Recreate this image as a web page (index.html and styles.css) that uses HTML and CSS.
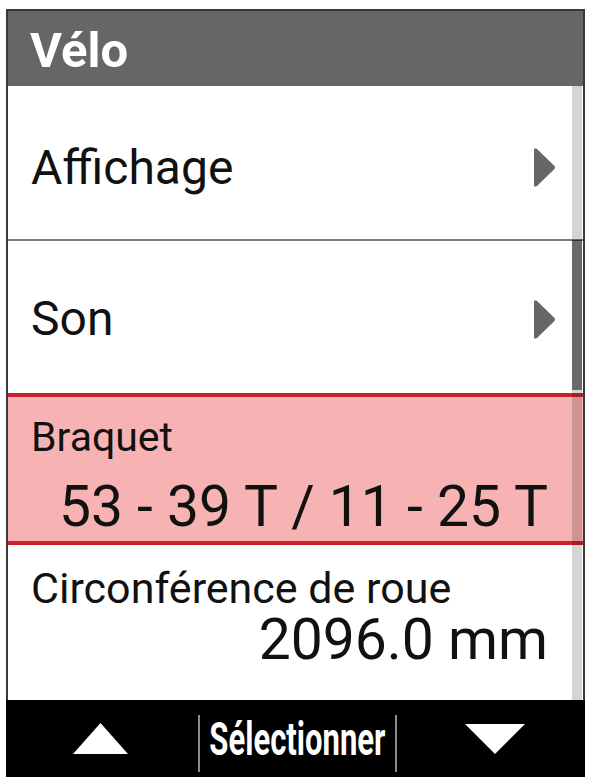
FILE: index.html
```html
<!DOCTYPE html>
<html lang="fr">
<head>
<meta charset="utf-8">
<title>Vélo</title>
<link rel="stylesheet" href="styles.css">
</head>
<body>
<div class="device">
  <div class="header">Vélo</div>
  <div class="list">
    <div class="row row-first">
      <span class="row-label">Affichage</span>
      <svg class="chev" width="24" height="41" viewBox="0 0 24 41"><path d="M2 3 Q2 0 5 2 L22 18.5 Q24 20.5 22 22.5 L5 39 Q2 41 2 38 Z" fill="#666"/></svg>
    </div>
    <div class="row row-second">
      <span class="row-label">Son</span>
      <svg class="chev" width="24" height="41" viewBox="0 0 24 41"><path d="M2 3 Q2 0 5 2 L22 18.5 Q24 20.5 22 22.5 L5 39 Q2 41 2 38 Z" fill="#666"/></svg>
    </div>
    <div class="setting selected">
      <div class="setting-label">Braquet</div>
      <div class="setting-value value-gear">53 - 39 T / 11 - 25 T</div>
    </div>
    <div class="setting plain">
      <div class="setting-label label-wheel">Circonférence de roue</div>
      <div class="setting-value value-wheel">2096.0 mm</div>
    </div>
    <div class="scrollbar"><div class="thumb"></div></div>
  </div>
  <div class="footer">
    <div class="cell cell-up">
      <svg width="55" height="31" viewBox="0 0 55 31"><polygon points="0,31 27.5,0 55,31" fill="#fff"/></svg>
    </div>
    <div class="divider"></div>
    <div class="cell cell-mid"><span class="select">Sélectionner</span></div>
    <div class="divider"></div>
    <div class="cell cell-down">
      <svg width="60" height="30" viewBox="0 0 60 30"><polygon points="0,0 60,0 30,30" fill="#fff"/></svg>
    </div>
  </div>
</div>
</body>
</html>
```
FILE: styles.css
```css
html, body {
  margin: 0;
  padding: 0;
  background: #fff;
}
body {
  font-family: Roboto, "Noto Sans", sans-serif;
  color: #111;
}
.device {
  margin: 9px 0 0 6px;
  width: 575px;
  border: 2px solid #3a3a3a;
  border-bottom: none;
  background: #fff;
}
.header {
  height: 71px;
  padding: 4px 0 0 22px;
  line-height: 71px;
  background: #666;
  color: #fff;
  font-weight: 700;
  font-size: 49px;
}
.list {
  position: relative;
}
.row {
  display: flex;
  align-items: center;
  justify-content: space-between;
  box-sizing: border-box;
  padding: 0 27px 0 23px;
  font-size: 48px;
}
.row-first {
  height: 155px;
  border-bottom: 2px solid #7a7a7a;
  padding-top: 10px;
}
.row-second {
  height: 152px;
  padding-top: 4px;
}
.row-label {
  line-height: 50px;
}
.chev {
  display: block;
}
.setting {
  box-sizing: border-box;
  padding: 0 35px 0 23px;
}
.selected {
  height: 152px;
  background: #f7b3b3;
  border-top: 4px solid #c9232b;
  border-bottom: 4px solid #c9232b;
  padding-top: 16px;
}
.plain {
  height: 155px;
  padding-top: 19px;
}
.setting-label {
  font-size: 41px;
  line-height: 48px;
}
.label-wheel {
  font-size: 43px;
}
.setting-value {
  text-align: right;
}
.value-gear {
  margin-top: 16px;
  font-size: 57px;
  line-height: 60px;
}
.value-wheel {
  font-size: 57px;
  line-height: 56px;
}
.scrollbar {
  position: absolute;
  top: 0;
  right: 1px;
  bottom: 0;
  width: 10px;
  background: rgba(0, 0, 0, 0.17);
}
.thumb {
  margin-top: 154px;
  height: 150px;
  background: rgba(0, 0, 0, 0.5);
}
.footer {
  display: flex;
  align-items: center;
  height: 77px;
  margin: 0 -2px;
  background: #000;
  color: #fff;
}
.cell {
  display: flex;
  align-items: center;
  justify-content: center;
  height: 100%;
}
.cell-up {
  width: 192px;
  box-sizing: border-box;
  justify-content: flex-start;
  padding-left: 67px;
}
.cell-mid {
  width: 195px;
}
.cell-down {
  flex: 1;
  justify-content: flex-start;
  padding-left: 68px;
}
.divider {
  width: 2px;
  height: 57px;
  margin-top: 10px;
  background: #8a8a8a;
}
.select {
  display: inline-block;
  font-weight: 700;
  font-size: 47px;
  line-height: 50px;
  transform: scaleX(0.66);
  white-space: nowrap;
}
```
